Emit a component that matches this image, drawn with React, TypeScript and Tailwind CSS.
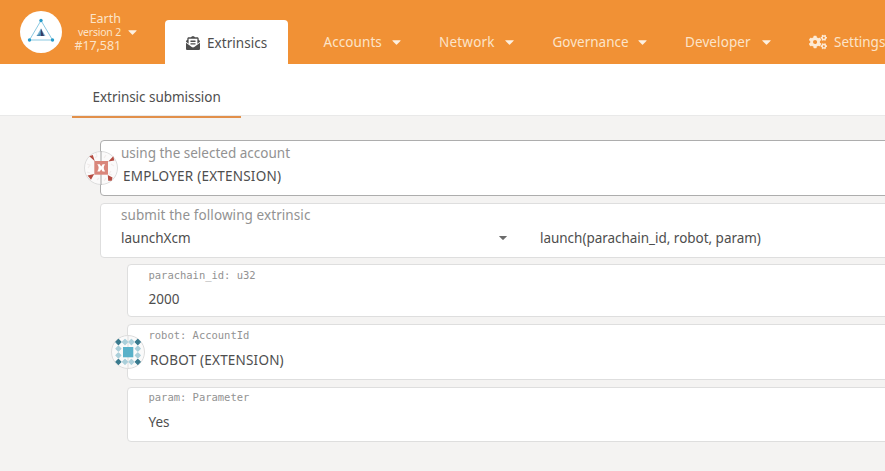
import React from 'react';
import { FaCogs, FaEnvelopeOpenText } from 'react-icons/fa';

function Caret({ className = '' }: { className?: string }) {
  return (
    <svg viewBox="0 0 10 5" className={`shrink-0 ${className}`} fill="currentColor">
      <path d="M0.6 0h8.8q.6 0 .2.5L5.5 4.7q-.5.5-1 0L.4.5Q0 0 .6 0z" />
    </svg>
  );
}

function MenuItem({ label, className }: { label: string; className: string }) {
  return (
    <div className={`flex shrink-0 items-center justify-between ${className}`}>
      <span>{label}</span>
      <Caret className="mt-px h-[5px] w-[9px] text-[#fdf0e0]" />
    </div>
  );
}

function Logo() {
  return (
    <svg viewBox="0 0 42 42" className="h-[42px] w-[42px] shrink-0">
      <circle cx="21" cy="21" r="21" fill="#fff" />
      <path d="M21 9.5 32.5 29h-23z" fill="none" stroke="#8bc9e2" strokeWidth="1" />
      <path d="M21 17.5 25.5 25h-9z" fill="#7cb7d5" />
      <path d="M21 17.5V25h-4.5l3-2z" fill="#4d86ab" />
      <path d="M21 17.5 24 25h-3z" fill="#343b67" />
      <circle cx="21" cy="9.5" r="1.7" fill="#279bc9" />
      <circle cx="9.5" cy="29" r="1.7" fill="#279bc9" />
      <circle cx="32.5" cy="29" r="1.7" fill="#279bc9" />
    </svg>
  );
}

function EmployerIcon() {
  return (
    <svg viewBox="0 0 34 34" className="absolute -left-[17px] top-[10px] h-[34px] w-[34px]">
      <circle cx="17" cy="17" r="16.5" fill="#fbfafa" stroke="#dcdcdc" />
      <path d="M17 0v34" stroke="#a3a3a3" />
      <path
        d="M12 2l1 3-2 2M22 4l-2 3M3 13l3 1-2 3M27 13l3 2M3 21l3 1M27 20l-2 3 3 1M13 29l2-2M20 30l2-3"
        fill="none"
        stroke="#f1eceb"
        strokeWidth="1.2"
      />
      <path d="M10.3 10h13.7v13.700h-13.700z" fill="#d9867b" />
      <path d="M13.300 13.300h2.500l1.400 2.200 1.400-2.200h2.500q-2.700 3.500 0 7.200h-2.500l-1.400-2.200-1.400 2.200h-2.500q2.700-3.700 0-7.200z" fill="#fff" />
      <path d="M5.300 5.200 8.800 4l2 6.200zM24.300 10.500l5-5.300 1 4.300zM3.500 24.500l6.700-1.500-3.200 5.700zM23.800 24l4.700 2.500-.800 3.300h-3.500z" fill="#b54c42" />
    </svg>
  );
}

function RobotIcon() {
  const ends = [[7.4, 7], [26.8, 7], [7.4, 26.8], [26.8, 26.8]];
  const sides = [
    [14, 7], [20.4, 7], [14, 26.8], [20.4, 26.8],
    [7.4, 13.7], [7.4, 20.3], [26.8, 13.7], [26.8, 20.3],
  ];
  const diamond = ([x, y]: number[]) => `M${x} ${y - 2.5}l2.5 2.5-2.5 2.5-2.5-2.5z`;
  return (
    <svg viewBox="0 0 34 34" className="absolute -left-[17px] top-[10px] h-[34px] w-[34px]">
      <circle cx="17" cy="17" r="16.5" fill="#fafafa" stroke="#dcdcdc" />
      <path d="M17 0v34" stroke="#dedede" />
      <g strokeLinejoin="round" strokeWidth="1.2">
        <path d={sides.map(diamond).join('')} fill="#aacfda" stroke="#aacfda" />
        <path d={ends.map(diamond).join('')} fill="#397a8e" stroke="#397a8e" />
      </g>
      <path d="M12 12h10.3v10.300H12z" fill="#59b1c9" />
    </svg>
  );
}

function Param({ label, value, className, icon }: {
  label: string; value: React.ReactNode; className: string; icon?: React.ReactNode;
}) {
  return (
    <div className={`relative ml-[27px] rounded-[4px] border border-[#dedede] bg-white pl-[20.5px] ${className}`}>
      {icon}
      <div className="font-['DejaVu_Sans_Mono',monospace] text-[10.5px] leading-[14px] tracking-[-0.02px] text-[#929292]">{label}</div>
      {value}
    </div>
  );
}

export default function App() {
  return (
    <div className="h-[471px] w-full overflow-hidden whitespace-nowrap bg-[#f4f3f2] font-['Noto_Sans',sans-serif] text-[13.5px] leading-5 text-[#4e4e4e]">
      <header className="flex h-16 bg-[#f19135] text-[#fce4c9]">
        <div className="flex w-[165px] shrink-0 pl-5 pt-[11px]">
          <Logo />
          <div className="w-[59px] text-right">
            <div className="text-[12.5px] leading-[15px]">Earth</div>
            <div className="text-[10.5px] leading-[13px] tracking-[-0.2px]">version 2</div>
            <div className="text-[12.5px] leading-[14px] tracking-[-0.1px]">#17,581</div>
          </div>
          <Caret className="ml-[7px] mt-[19px] h-[5px] w-[9px] text-[#fdf0e0]" />
        </div>
        <div className="mt-5 flex h-11 w-[123px] shrink-0 items-center rounded-t-[4px] bg-white pl-[21px] pt-[2px] text-[#4e4e4e]">
          <FaEnvelopeOpenText className="mr-[7px] h-[14px] w-[14px]" />
          <span className="tracking-[0.04px]">Extrinsics</span>
        </div>
        <nav className="flex pt-5">
          <MenuItem label="Accounts" className="ml-[35.5px] w-[77.5px] tracking-[0.08px]" />
          <MenuItem label="Network" className="ml-[38px] w-[75px] tracking-[0.2px]" />
          <MenuItem label="Governance" className="ml-[38.5px] w-[94.5px]" />
          <MenuItem label="Developer" className="ml-[38px] w-[86px] tracking-[0.1px]" />
          <div className="ml-[38px] flex shrink-0 items-center">
            <FaCogs className="mr-[7px] h-[18px] w-[18px] text-[#fdead5]" />
            <span>Settings</span>
          </div>
        </nav>
      </header>

      <div className="h-[52px] border-b border-[#e9e9e9] bg-white pl-[72px]">
        <div className="h-[54px] w-[169px] border-b-2 border-[#e2904a] pl-[20.5px] pt-[23px] tracking-[-0.04px]">
          Extrinsic submission
        </div>
      </div>

      <main className="-mr-2 pl-[100px] pt-6">
        <div className="relative h-14 rounded-[4px] border border-[#adadad] bg-white pl-5 pt-[2px]">
          <EmployerIcon />
          <div className="text-[#929292]">using the selected account</div>
          <div className="mt-[3px] pl-[2px] tracking-[0.22px]">EMPLOYER (EXTENSION)</div>
        </div>
        <div className="mt-[7px] h-[55px] rounded-[4px] border border-[#dedede] bg-white pl-[20px] pt-px">
          <div className="tracking-[0.08px] text-[#929292]">submit the following extrinsic</div>
          <div className="mt-[3px] flex items-center">
            <span className="w-[378px]">launchXcm</span>
            <Caret className="h-[4px] w-[8px] text-[#6b6b6b]" />
            <span className="ml-[33px] tracking-[-0.03px]">launch(parachain_id, robot, param)</span>
          </div>
        </div>
        <Param className="mt-[6px] h-[53px] pt-[3px]" label="parachain_id: u32" value={<div className="mt-[7px]">2000</div>} />
        <Param
          className="mt-[7px] h-14 pt-[3px]"
          label="robot: AccountId"
          value={<div className="mt-[8px] pl-[1.5px] tracking-[0.2px]">ROBOT (EXTENSION)</div>}
          icon={<RobotIcon />}
        />
        <Param className="mt-[7px] h-[55px] pt-[2px]" label="param: Parameter" value={<div className="mt-[8px]">Yes</div>} />
      </main>
    </div>
  );
}
